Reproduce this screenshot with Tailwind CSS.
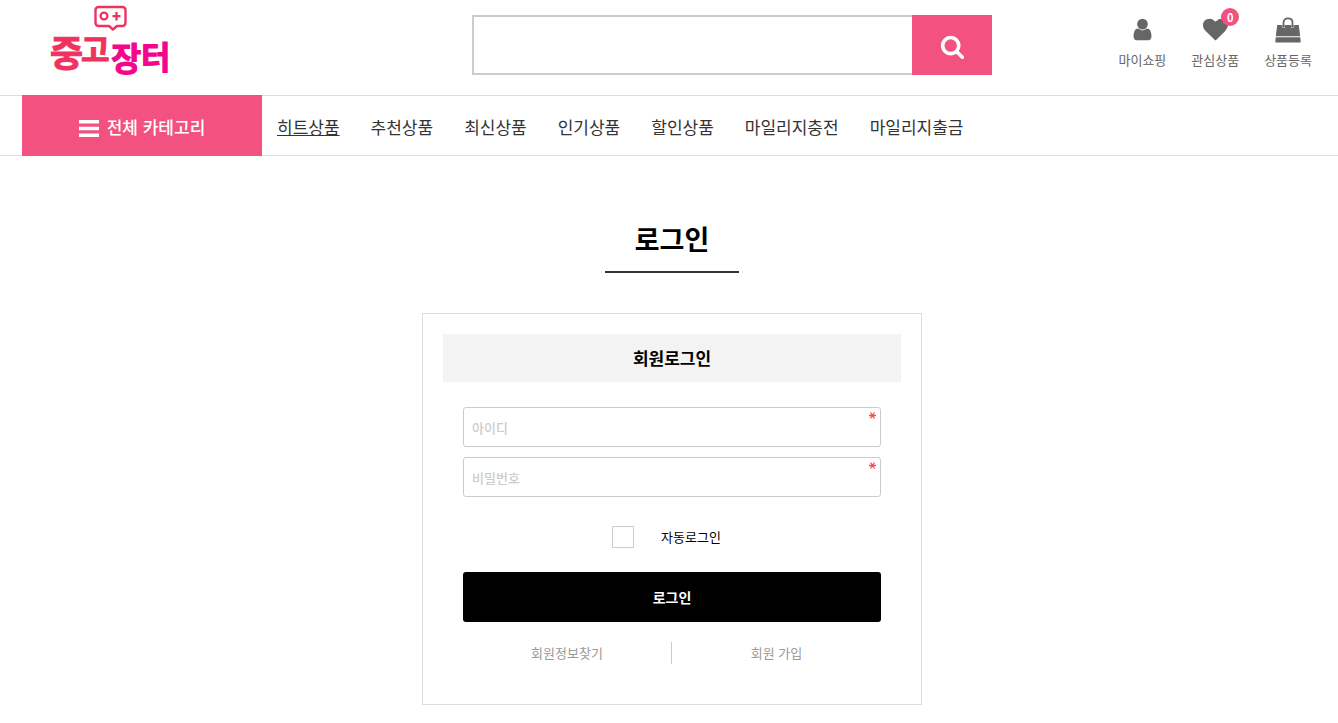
<!DOCTYPE html>
<html lang="ko">
<head>
  <meta charset="UTF-8" />
  <meta name="viewport" content="width=device-width, initial-scale=1.0"/>
  <title>로그인 | 중고장터</title>
  <script src="https://cdn.jsdelivr.net/npm/@tailwindcss/browser@4"></script>
</head>
<body class="bg-white font-['Noto_Sans_CJK_KR',sans-serif] text-[13px] text-black">
  <!-- Header -->
  <header>
    <div class="flex h-[95px] items-start pl-[22px] pr-[26px]">
      <div class="w-[450px] shrink-0 pl-7">
        <a href="#" class="block w-[120px]" aria-label="중고장터">
          <svg class="block h-20 w-[120px]" viewBox="0 0 120 80">
            <path d="M48.500 7h24a3 3 0 0 1 3 3v13a3 3 0 0 1-3 3h-5.500l-4 3.500-4-3.500h-10.500a3 3 0 0 1-3-3v-13a3 3 0 0 1 3-3z" fill="none" stroke="#f0325f" stroke-width="2.400" stroke-linejoin="round"/>
            <circle cx="54" cy="16" r="3.400" fill="none" stroke="#f0325f" stroke-width="2.300"/>
            <path d="M66.500 12v8.500M62.500 16.200h8" stroke="#f0325f" stroke-width="2.300"/>
            <g font-family="'Noto Sans CJK KR', sans-serif" font-weight="700" stroke-width="1">
              <text x="0" y="67" font-size="36" fill="#f0325f" stroke="#f0325f">중</text>
              <text x="31" y="61" font-size="31" fill="#f0325f" stroke="#f0325f">고</text>
              <text x="61" y="71" font-size="33" fill="#f4068c" stroke="#f4068c">장</text>
              <text x="91" y="69" font-size="32" fill="#f4068c" stroke="#f4068c">터</text>
            </g>
          </svg>
        </a>
      </div>

      <form class="mt-[15px] flex h-[60px] w-[520px]" role="search">
        <input id="search" name="q" type="text" aria-label="검색어" class="min-w-0 flex-1 border-2 border-r-0 border-[#ccc] px-3 text-base outline-none"/>
        <button type="submit" aria-label="검색" class="flex w-20 items-center justify-center bg-[#f3517f] pt-[3px] text-white">
          <svg class="size-[25px]" viewBox="0 0 1792 1792" fill="currentColor"><path d="M1216 832q0-185-131.500-316.500t-316.500-131.500-316.500 131.500-131.500 316.500 131.500 316.500 316.500 131.500 316.500-131.500 131.500-316.500zm512 832q0 52-38 90t-90 38q-54 0-90-38l-343-342q-179 124-399 124-143 0-273.500-55.500t-225-150-150-225-55.500-273.500 55.500-273.500 150-225 225-150 273.500-55.500 273.500 55.500 225 150 150 225 55.500 273.500q0 220-124 399l343 343q37 37 37 90z"/></svg>
        </button>
      </form>

      <ul class="ml-auto flex gap-[25px] pt-[17px] leading-5 text-[#666]">
        <li>
          <a href="#" class="flex flex-col items-center gap-2">
            <svg class="size-[25px]" viewBox="0 0 1792 1792" fill="currentColor"><path d="M1536 1399q0 109-62.500 187t-150.500 78h-854q-88 0-150.500-78t-62.500-187q0-85 8.500-160.500t31.500-152 58.500-131 94-89 134.500-34.500q131 128 313 128t313-128q76 0 134.500 34.500t94 89 58.500 131 31.500 152 8.500 160.500zm-256-887q0 159-112.500 271.500t-271.500 112.500-271.500-112.500-112.500-271.500 112.500-271.500 271.500-112.500 271.500 112.500 112.500 271.500z"/></svg>
            마이쇼핑
          </a>
        </li>
        <li>
          <a href="#" class="relative flex flex-col items-center gap-2">
            <svg class="size-[25px]" viewBox="0 0 1792 1792" fill="currentColor"><path d="M896 1664q-26 0-44-18l-624-602q-10-8-27.500-26t-55.500-65.500-68-97.500-53.500-121-23.500-138q0-220 127-344t351-124q62 0 126.500 21.500t120 58 95.500 68.500 76 68q36-36 76-68t95.500-68.500 120-58 126.500-21.500q224 0 351 124t127 344q0 221-229 450l-623 600q-18 18-44 18z"/></svg>
            관심상품
            <span class="absolute -top-[9px] right-0 size-[18px] rounded-full bg-[#f3517f] text-center text-[11px] leading-[18px] font-bold text-white">0</span>
          </a>
        </li>
        <li>
          <a href="#" class="flex flex-col items-center gap-2">
            <svg class="h-[25px] w-[26px] overflow-visible" viewBox="0 0 26 25" fill="currentColor">
              <path d="M2.200 8h21.600l1.400 11.300h-24.400zM.7 20.300h24.600l.4 5.200h-25.400z"/>
              <path d="M8.500 7.800v3.200M17.500 7.800v3.200" stroke="#fff" stroke-opacity=".55" stroke-width="3.200"/>
              <path d="M8.500 10.500v-5c0-2.800 2-4.200 4.500-4.200s4.500 1.400 4.500 4.200v5" fill="none" stroke="currentColor" stroke-width="1.800"/>
            </svg>
            상품등록
          </a>
        </li>
      </ul>
    </div>

    <nav class="flex h-[61px] border-y border-[#ddd] pl-[22px] text-[17px]">
      <button type="button" class="-my-px flex w-60 items-center justify-center gap-2 bg-[#f3517f] pt-[2px] font-medium text-white">
        <svg class="mt-[3px] h-[17px] w-5" viewBox="0 0 20 17" fill="currentColor"><path d="M0 0h20v3.500h-20zM0 6.800h20v3.500h-20zM0 13.500h20v3.500h-20z"/></svg>
        전체 카테고리
      </button>
      <ul class="flex items-center gap-[31px] pl-[15px] pt-[2px] text-[#333]">
        <li><a href="#" class="underline">히트상품</a></li>
        <li><a href="#">추천상품</a></li>
        <li><a href="#">최신상품</a></li>
        <li><a href="#">인기상품</a></li>
        <li><a href="#">할인상품</a></li>
        <li><a href="#">마일리지충전</a></li>
        <li><a href="#">마일리지출금</a></li>
      </ul>
    </nav>
  </header>

  <!-- Login -->
  <main class="flex flex-col items-center pb-4 pl-[22px] pr-4 pt-[63px]">
    <h1 class="mb-10 border-b-2 border-[#333] px-[30px] pb-3 text-[27px] leading-10 font-bold">로그인</h1>

    <section class="w-full max-w-[500px] border border-[#ddd] p-5">
      <h2 class="bg-[#f3f3f3] text-center text-[17px] leading-[48px] font-bold">회원로그인</h2>
      <form class="px-5 pb-5 pt-[25px]">
        <div class="relative mb-[10px]">
          <input id="login-id" name="login-id" type="text" aria-label="아이디" placeholder="아이디" required
            class="block h-10 w-full rounded-[3px] border border-[#ccc] px-2 font-medium outline-none placeholder:text-[#ccc]"/>
          <svg class="absolute right-[5px] top-[5px] h-[7px] w-[7px]" viewBox="0 0 7 7"><path d="M0 3.500h7M1.500.5l4 6M5.500.5l-4 6" stroke="#fa4b4b" stroke-width="1.300"/></svg>
        </div>
        <div class="relative">
          <input id="login-pw" name="login-pw" type="password" aria-label="비밀번호" placeholder="비밀번호" required
            class="block h-10 w-full rounded-[3px] border border-[#ccc] px-2 font-medium outline-none placeholder:text-[#ccc]"/>
          <svg class="absolute right-[5px] top-[5px] h-[7px] w-[7px]" viewBox="0 0 7 7"><path d="M0 3.500h7M1.500.5l4 6M5.500.5l-4 6" stroke="#fa4b4b" stroke-width="1.300"/></svg>
        </div>
        <div class="my-6 flex h-[27px] items-center justify-center gap-[27px] pt-[5px] pr-[11px]">
          <input id="auto-login" name="auto-login" type="checkbox" class="size-[22px] appearance-none border border-[#d0cdc9] checked:bg-black"/>
          <label for="auto-login">자동로그인</label>
        </div>
        <button type="submit" class="block h-[50px] w-full rounded-[3px] bg-black text-sm font-bold text-white">로그인</button>
        <div class="mt-5 grid grid-cols-2 text-center leading-[22px] text-[#999]">
          <a href="#" class="border-r border-[#ccc]">회원정보찾기</a>
          <a href="#">회원 가입</a>
        </div>
      </form>
    </section>
  </main>
</body>
</html>
